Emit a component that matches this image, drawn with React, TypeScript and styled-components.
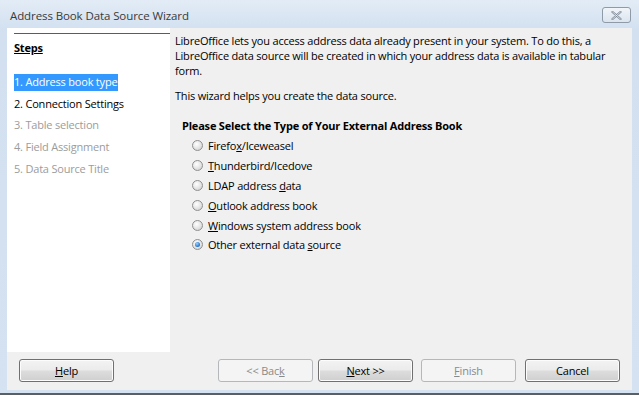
import React from "react";
import styled, { createGlobalStyle } from "styled-components";

const Global = createGlobalStyle`
  html, body { margin: 0; padding: 0; }
  body {
    width: 639px;
    height: 395px;
    overflow: hidden;
    font-family: "Open Sans", "Noto Sans", sans-serif;
    font-size: 11px;
    letter-spacing: -0.2px;
    color: #000;
  }
`;

const Window = styled.div`
  width: 639px;
  height: 395px;
  box-sizing: border-box;
  display: flex;
  flex-direction: column;
  background: linear-gradient(180deg, #e3ecf6 0px, #d2e0f0 30px, #d5e2f1 100%);
  border-bottom: 2px solid #5a5f66;
`;

const TitleBar = styled.div`
  height: 28px;
  flex: none;
  display: flex;
  align-items: flex-start;
  justify-content: space-between;
  padding: 0 8px 0 10px;
`;

const Title = styled.div`
  margin-top: 8px;
  font-size: 11.5px;
  color: #3a3a3a;
  letter-spacing: -0.1px;
`;

const CloseButton = styled.div`
  margin-top: 7px;
  width: 29px;
  height: 16px;
  box-sizing: border-box;
  border: 1px solid #8e9aa8;
  border-radius: 3px;
  background: linear-gradient(180deg, #f1f5fa, #dbe4ee);
  display: flex;
  align-items: center;
  justify-content: center;
`;

const Client = styled.div`
  flex: 1;
  margin: 0 7px 3px 7px;
  background: #f0f0f0;
  display: flex;
  flex-direction: column;
`;

const Main = styled.div`
  height: 324px;
  display: flex;
`;

const StepsPanel = styled.div`
  width: 163px;
  flex: none;
  background: #fff;
  padding: 5px 0 0 7px;
  box-sizing: border-box;
`;

const StepsHeader = styled.div`
  border-top: 1px solid #5c5c5c;
  padding-top: 6px;
  font-weight: 700;
  text-decoration: underline;
  line-height: 15px;
  height: 32px;
`;

const StepItem = styled.div<{ $state: "active" | "normal" | "disabled" }>`
  height: 21.6px;
  display: flex;
  align-items: center;
  span {
    padding: 1px 1px 2px 0;
    line-height: 14px;
    color: ${(p) => (p.$state === "active" ? "#fff" : p.$state === "disabled" ? "#9c9c9c" : "#000")};
    background: ${(p) => (p.$state === "active" ? "#3399ff" : "transparent")};
  }
`;

const Content = styled.div`
  flex: 1;
  padding: 5px 0 0 5px;
  line-height: 15px;
`;

const Para = styled.p`
  margin: 0 0 10px 0;
  white-space: nowrap;
`;

const GroupTitle = styled.div`
  font-weight: 700;
  margin: 15px 0 3px 7px;
  line-height: 15px;
`;

const RadioList = styled.div`
  display: flex;
  flex-direction: column;
  padding-left: 17px;
`;

const RadioRow = styled.label`
  height: 19.8px;
  display: flex;
  align-items: center;
  gap: 5px;
  u {
    text-decoration: underline;
  }
`;

const RadioCircle = styled.span<{ $checked?: boolean }>`
  width: 11px;
  height: 11px;
  box-sizing: border-box;
  border-radius: 50%;
  border: 1px solid #8f8f8f;
  background: radial-gradient(circle at 40% 35%, #ffffff 0%, #e6e6e6 50%, #c8c8c8 100%);
  display: flex;
  align-items: center;
  justify-content: center;
  flex: none;
  &::after {
    content: "";
    display: ${(p) => (p.$checked ? "block" : "none")};
    width: 5px;
    height: 5px;
    border-radius: 50%;
    background: radial-gradient(circle at 40% 35%, #9fd2ff 0%, #2a7fd4 60%, #0b4f9a 100%);
  }
`;

const Footer = styled.div`
  flex: 1;
  display: flex;
  align-items: flex-start;
  padding: 7px 12px 0 12px;
`;

const Spacer = styled.div`
  flex: 1;
`;

const Button = styled.button<{ $gap?: number; $disabled?: boolean }>`
  width: 95px;
  height: 23px;
  margin-left: ${(p) => p.$gap ?? 0}px;
  box-sizing: border-box;
  border-radius: 3px;
  font-family: "Open Sans", "Noto Sans", sans-serif;
  font-size: 11px;
  letter-spacing: -0.2px;
  padding: 0;
  border: 1px solid ${(p) => (p.$disabled ? "#b5b8bb" : "#707070")};
  color: ${(p) => (p.$disabled ? "#8a8a8a" : "#000")};
  background: ${(p) =>
    p.$disabled
      ? "#f4f4f4"
      : "linear-gradient(180deg, #f3f3f3 0%, #ebebeb 48%, #dddddd 52%, #cfcfcf 100%)"};
  box-shadow: inset 0 0 0 1px ${(p) => (p.$disabled ? "#f4f4f4" : "#fcfcfc")};
  u {
    text-decoration: underline;
  }
`;

const steps: { label: string; state: "active" | "normal" | "disabled" }[] = [
  { label: "1. Address book type", state: "active" },
  { label: "2. Connection Settings", state: "normal" },
  { label: "3. Table selection", state: "disabled" },
  { label: "4. Field Assignment", state: "disabled" },
  { label: "5. Data Source Title", state: "disabled" },
];

export default function App() {
  return (
    <>
      <Global />
      <Window>
        <TitleBar>
          <Title>Address Book Data Source Wizard</Title>
          <CloseButton>
            <svg width="11" height="9" viewBox="0 0 11 9">
              <path d="M1.5 1 L9.5 8 M9.5 1 L1.5 8" stroke="#7c8795" strokeWidth="2.2" strokeLinecap="round" />
              <path d="M1.5 1 L9.5 8 M9.5 1 L1.5 8" stroke="#eef2f7" strokeWidth="0.8" strokeLinecap="round" />
            </svg>
          </CloseButton>
        </TitleBar>
        <Client>
          <Main>
            <StepsPanel>
              <StepsHeader>Steps</StepsHeader>
              {steps.map((s) => (
                <StepItem key={s.label} $state={s.state}>
                  <span>{s.label}</span>
                </StepItem>
              ))}
            </StepsPanel>
            <Content>
              <Para>
                LibreOffice lets you access address data already present in your system. To do this, a
                <br />
                LibreOffice data source will be created in which your address data is available in tabular
                <br />
                form.
              </Para>
              <Para>This wizard helps you create the data source.</Para>
              <GroupTitle>Please Select the Type of Your External Address Book</GroupTitle>
              <RadioList>
                <RadioRow>
                  <RadioCircle />
                  <span>
                    Firefo<u>x</u>/Iceweasel
                  </span>
                </RadioRow>
                <RadioRow>
                  <RadioCircle />
                  <span>
                    <u>T</u>hunderbird/Icedove
                  </span>
                </RadioRow>
                <RadioRow>
                  <RadioCircle />
                  <span>
                    LDAP address <u>d</u>ata
                  </span>
                </RadioRow>
                <RadioRow>
                  <RadioCircle />
                  <span>
                    <u>O</u>utlook address book
                  </span>
                </RadioRow>
                <RadioRow>
                  <RadioCircle />
                  <span>
                    <u>W</u>indows system address book
                  </span>
                </RadioRow>
                <RadioRow>
                  <RadioCircle $checked />
                  <span>
                    Other external data <u>s</u>ource
                  </span>
                </RadioRow>
              </RadioList>
            </Content>
          </Main>
          <Footer>
            <Button>
              <u>H</u>elp
            </Button>
            <Spacer />
            <Button $disabled>
              &lt;&lt; Bac<u>k</u>
            </Button>
            <Button $gap={5}>
              <u>N</u>ext &gt;&gt;
            </Button>
            <Button $gap={8} $disabled>
              <u>F</u>inish
            </Button>
            <Button $gap={9}>Cancel</Button>
          </Footer>
        </Client>
      </Window>
    </>
  );
}
